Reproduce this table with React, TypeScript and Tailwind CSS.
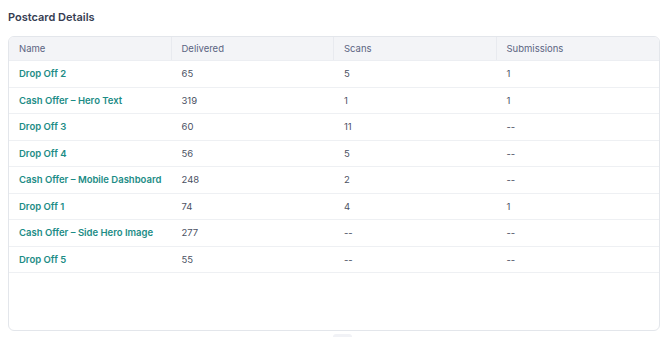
const rows = [
  { name: 'Drop Off 2', delivered: '65', scans: '5', submissions: '1' },
  { name: 'Cash Offer – Hero Text', delivered: '319', scans: '1', submissions: '1' },
  { name: 'Drop Off 3', delivered: '60', scans: '11', submissions: '--' },
  { name: 'Drop Off 4', delivered: '56', scans: '5', submissions: '--' },
  { name: 'Cash Offer – Mobile Dashboard', delivered: '248', scans: '2', submissions: '--' },
  { name: 'Drop Off 1', delivered: '74', scans: '4', submissions: '1' },
  { name: 'Cash Offer – Side Hero Image', delivered: '277', scans: '--', submissions: '--' },
  { name: 'Drop Off 5', delivered: '55', scans: '--', submissions: '--' },
]

const headers = ['Name', 'Delivered', 'Scans', 'Submissions']

export default function App() {
  return (
    <main className="w-[670px] h-[337px] bg-white px-2 pt-[9px] font-['Inter',sans-serif] overflow-hidden relative">
      <h1 className="text-[11px] font-semibold text-[#363d52] leading-4 mb-[11px]">
        Postcard Details
      </h1>

      <div className="w-[652px] h-[295px] border border-[#e3e6eb] rounded-[6px] overflow-hidden">
        <div className="grid grid-cols-4 h-6 bg-[#f3f4f7] border-b border-[#eceef2]">
          {headers.map((h, i) => (
            <div
              key={h}
              className={`flex items-center pt-px pl-[10px] text-[9.5px] text-[#5b6482] ${
                i < 3 ? 'border-r border-[#e8eaef]' : ''
              }`}
            >
              {h}
            </div>
          ))}
        </div>

        {rows.map((r) => (
          <div
            key={r.name}
            className="grid grid-cols-4 h-[26.5px] pt-px border-b border-[#eef0f3] text-[9.5px] items-center"
          >
            <div className="pl-[10px] font-semibold text-[#1c8c86]">{r.name}</div>
            <div className="pl-[10px] text-[#4b5163]">{r.delivered}</div>
            <div className="pl-[10px] text-[#4b5163]">{r.scans}</div>
            <div className="pl-[10px] text-[#4b5163]">{r.submissions}</div>
          </div>
        ))}
      </div>

      <div className="absolute left-[333px] top-[334px] w-[19px] h-[6px] rounded-[3px] bg-[#f1f2f6]" />
    </main>
  )
}
